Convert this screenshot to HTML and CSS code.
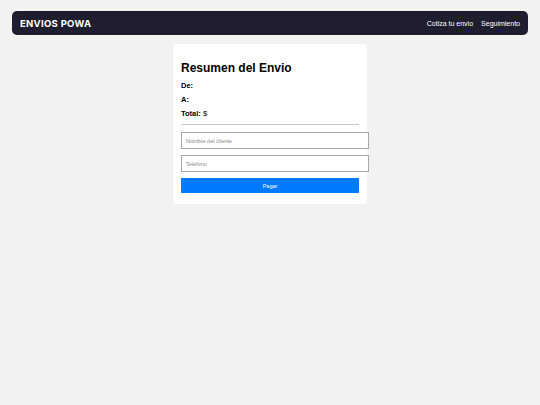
FILE: index.html
```html
<!DOCTYPE html>
<html lang="es">
<head>
<meta charset="utf-8">
<title>Envios Powa</title>
<link rel="stylesheet" href="styles.css">
</head>
<body>
<nav class="navbar">
  <div class="brand">ENVIOS POWA</div>
  <div class="links">
    <a class="link" href="#">Cotiza tu envio</a>
    <a class="link" href="#">Seguimiento</a>
  </div>
</nav>
<main class="main">
  <section class="card">
    <h2 class="title">Resumen del Envio</h2>
    <p class="row"><strong>De:</strong></p>
    <p class="row"><strong>A:</strong></p>
    <p class="row"><strong>Total:</strong> $</p>
    <hr class="sep">
    <input class="field" type="text" placeholder="Nombre del cliente">
    <input class="field" type="text" placeholder="Teléfono">
    <button class="pay">Pagar</button>
  </section>
</main>
</body>
</html>
```

FILE: styles.css
```css
html, body {
  margin: 0;
  padding: 0;
  background: #f2f2f2;
  font-family: "Liberation Sans", Arial, sans-serif;
}
body {
  padding: 11px 12px 0;
}
.navbar {
  display: flex;
  align-items: center;
  justify-content: space-between;
  height: 24px;
  padding: 0 8px;
  background: #1f1e2e;
  border-radius: 5px;
}
.brand {
  font-family: Inter, "Open Sans", sans-serif;
  font-weight: 700;
  font-size: 9.5px;
  letter-spacing: 0.3px;
  color: #ffffff;
}
.links {
  display: flex;
  gap: 8px;
}
.link,
.link:visited {
  color: #ffffff;
  text-decoration: none;
  font-size: 7px;
}
.main {
  display: flex;
  justify-content: center;
  padding-top: 9px;
}
.card {
  width: 178px;
  padding: 8px 8px 11px;
  background: #ffffff;
  border-radius: 4px;
}
.title {
  margin: 9px 0 4px;
  font-size: 12px;
  font-weight: 700;
  color: #000;
}
.row {
  margin: 0;
  height: 14px;
  line-height: 14px;
  font-size: 7.5px;
  color: #000;
}
.sep {
  margin: 3px 0 7px;
  border: 0;
  border-top: 1px solid #c8c8c8;
}
.field {
  display: block;
  width: 100%;
  box-sizing: content-box;
  height: 15px;
  padding: 0 4px;
  margin: 0 0 6px;
  border: 1px solid #aaaaaa;
  border-radius: 0;
  font-family: "Liberation Sans", Arial, sans-serif;
  font-size: 5.5px;
  background: #fff;
}
.field::placeholder {
  color: #888;
}
.pay {
  display: block;
  width: 100%;
  height: 15px;
  margin: 1px 0 0;
  border: 0;
  background: #007bff;
  color: #fff;
  font-family: "Liberation Sans", Arial, sans-serif;
  font-size: 5.5px;
}
```
